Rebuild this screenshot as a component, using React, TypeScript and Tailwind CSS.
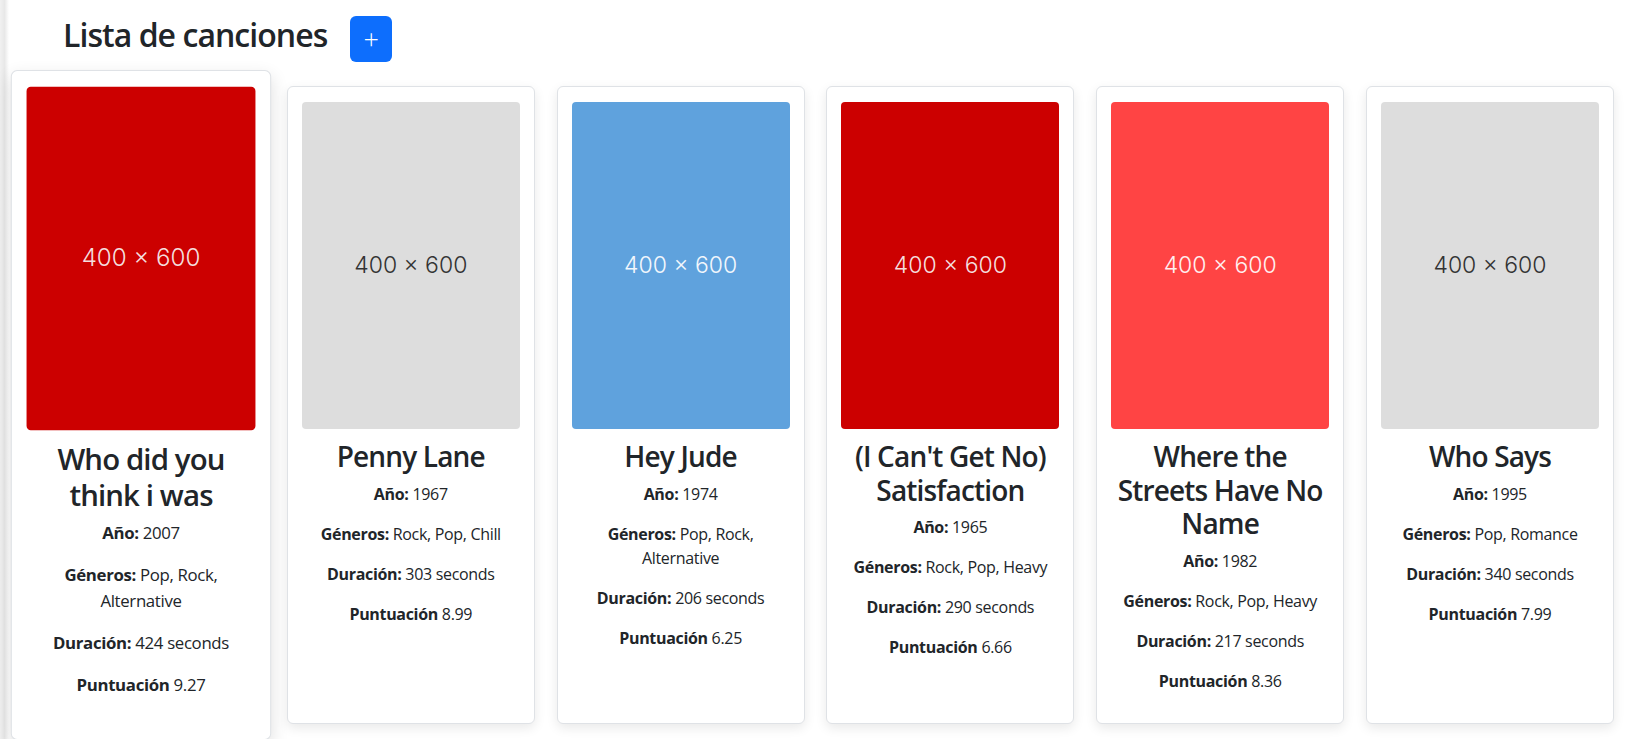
import React from "react";

type Song = {
  title: string;
  year: number;
  genres: string;
  duration: number;
  score: string;
  bg: string;
  fg: string;
};

const songs: Song[] = [
  { title: "Who did you think i was", year: 2007, genres: "Pop, Rock, Alternative", duration: 424, score: "9.27", bg: "bg-[#cc0000]", fg: "text-[#f4dede]" },
  { title: "Penny Lane", year: 1967, genres: "Rock, Pop, Chill", duration: 303, score: "8.99", bg: "bg-[#dddddd]", fg: "text-[#333333]" },
  { title: "Hey Jude", year: 1974, genres: "Pop, Rock, Alternative", duration: 206, score: "6.25", bg: "bg-[#5fa2dd]", fg: "text-[#f2f7fc]" },
  { title: "(I Can't Get No) Satisfaction", year: 1965, genres: "Rock, Pop, Heavy", duration: 290, score: "6.66", bg: "bg-[#cc0000]", fg: "text-[#f4dede]" },
  { title: "Where the Streets Have No Name", year: 1982, genres: "Rock, Pop, Heavy", duration: 217, score: "8.36", bg: "bg-[#ff4444]", fg: "text-[#fff0f0]" },
  { title: "Who Says", year: 1995, genres: "Pop, Romance", duration: 340, score: "7.99", bg: "bg-[#dddddd]", fg: "text-[#333333]" },
];

function Field({ label, children }: { label: string; children: React.ReactNode }) {
  return (
    <p className="mb-4 text-base leading-6 text-[#212529]">
      <strong className="font-bold">{label}</strong> {children}
    </p>
  );
}

function SongCard({ song, hovered }: { song: Song; hovered?: boolean }) {
  return (
    <div
      className={
        hovered
          ? "relative z-10 w-[248px] shrink-0 scale-105 rounded-[6px] border border-[#dfe2e6] bg-white px-[14px] pt-[15px] pb-[14px] text-center shadow-[0_6px_16px_rgba(0,0,0,0.12)]"
          : "relative w-[248px] shrink-0 rounded-[6px] border border-[#dfe2e6] bg-white px-[14px] pt-[15px] pb-[14px] text-center shadow-[0_4px_12px_rgba(0,0,0,0.09)]"
      }
    >
      <div
        className={`flex h-[327px] w-full items-center justify-center rounded-[4px] ${song.bg} ${song.fg} text-[23px] font-light tracking-normal`}
        style={{ fontFamily: "Inter, sans-serif" }}
      >
        400 × 600
      </div>
      <h3 className="mt-[11px] mb-2 text-[28px] font-semibold leading-[1.2] tracking-[-0.03em] text-[#212529]">
        {song.title}
      </h3>
      <Field label="Año:">{song.year}</Field>
      <Field label="Géneros:">{song.genres}</Field>
      <Field label="Duración:">{song.duration} seconds</Field>
      <Field label="Puntuación">{song.score}</Field>
    </div>
  );
}

export default function App() {
  return (
    <div
      className="flex min-h-screen w-full overflow-hidden bg-white text-[#212529] tracking-[-0.02em]"
      style={{ fontFamily: '"Open Sans", "Noto Sans", sans-serif' }}
    >
      <div className="w-[9px] shrink-0 bg-gradient-to-r from-[#f1f1f1] via-[#e8e8e8] to-white" />
      <main className="flex flex-1 flex-col pl-[8px]">
        <header className="flex items-start gap-[27px] pt-4 pl-[46px]">
          <h2 className="w-[260px] whitespace-nowrap text-[32px] font-semibold leading-[1.2] tracking-[-0.03em] text-[#212529]">
            Lista de canciones
          </h2>
          <button
            type="button"
            className="flex h-[46px] w-[42px] items-center justify-center rounded-[6px] bg-[#0d6efd] pb-[2px] text-[27px] font-light leading-none text-white"
          >
            +
          </button>
        </header>
        <section className="mt-[24px] flex items-stretch gap-[21.8px]">
          {songs.map((s, i) => (
            <SongCard key={s.title} song={s} hovered={i === 0} />
          ))}
        </section>
      </main>
    </div>
  );
}
